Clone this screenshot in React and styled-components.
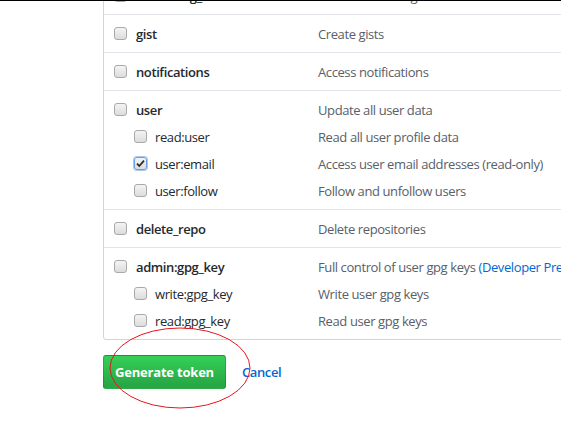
import React from 'react'
import styled, { createGlobalStyle } from 'styled-components'

const GlobalStyle = createGlobalStyle`
  html, body {
    margin: 0;
    padding: 0;
    background: #fff;
    overflow: hidden;
  }
  body {
    font-family: 'Open Sans', 'Liberation Sans', sans-serif;
    font-size: 13px;
    letter-spacing: -0.4px;
    color: #24292e;
  }
`

const scopes = [
  { name: 'admin:org_hook', desc: 'Full control of organization hooks' },
  { name: 'gist', desc: 'Create gists' },
  { name: 'notifications', desc: 'Access notifications' },
  {
    name: 'user',
    desc: 'Update all user data',
    children: [
      { name: 'read:user', desc: 'Read all user profile data' },
      { name: 'user:email', desc: 'Access user email addresses (read-only)', checked: true },
      { name: 'user:follow', desc: 'Follow and unfollow users' },
    ],
  },
  { name: 'delete_repo', desc: 'Delete repositories' },
  {
    name: 'admin:gpg_key',
    desc: 'Full control of user gpg keys',
    link: '(Developer Preview)',
    children: [
      { name: 'write:gpg_key', desc: 'Write user gpg keys' },
      { name: 'read:gpg_key', desc: 'Read user gpg keys' },
    ],
  },
]

const Check = ({ checked }) => (
  <Box $checked={checked}>
    {checked && (
      <svg width='9' height='9' viewBox='0 0 9 9'>
        <path d='M1 4.6 L3.3 7 L8 1.6' fill='none' stroke='#2b2b2b' strokeWidth='1.8' />
      </svg>
    )}
  </Box>
)

const App = () => {
  return (
    <Page>
      <GlobalStyle />
      <Content>
        <Panel>
          {scopes.map((s) => (
            <Group key={s.name}>
              <Item>
                <Label $main>
                  <Check />
                  {s.name}
                </Label>
                <Desc>
                  {s.desc}
                  {s.link && <Link> {s.link}</Link>}
                </Desc>
              </Item>
              {s.children &&
                s.children.map((c) => (
                  <Item key={c.name}>
                    <Label>
                      <Check checked={c.checked} />
                      {c.name}
                    </Label>
                    <Desc>{c.desc}</Desc>
                  </Item>
                ))}
            </Group>
          ))}
        </Panel>
        <Footer>
          <Button>Generate token</Button>
          <Cancel href='#'>Cancel</Cancel>
          <Circle width='144' height='84' viewBox='0 0 144 84'>
            <ellipse cx='72' cy='42' rx='70' ry='40' fill='none' stroke='#e8141c' strokeWidth='1' />
          </Circle>
        </Footer>
      </Content>
    </Page>
  )
}

const Page = styled.div`
  border-top: 1px solid #000;
  height: 438px;
  overflow: hidden;
`

const Content = styled.div`
  padding-left: 103px;
`

const Panel = styled.div`
  width: 560px;
  margin-top: -25px;
  border: 1px solid #d1d5da;
  border-radius: 0 0 0 3px;
`

const Group = styled.div`
  padding: 9px 10px 8px;
  & + & {
    border-top: 1px solid #e1e4e8;
  }
`

const Item = styled.div`
  display: grid;
  grid-template-columns: 204px 1fr;
  line-height: 20px;
  & + & {
    margin-top: 7px;
  }
`

const Label = styled.div`
  display: flex;
  align-items: center;
  padding-left: ${(p) => (p.$main ? '0' : '20px')};
  gap: ${(p) => (p.$main ? '9px' : '8px')};
  font-weight: ${(p) => (p.$main ? 600 : 400)};
  color: #24292e;
`

const Desc = styled.div`
  color: #586069;
  white-space: nowrap;
`

const Link = styled.span`
  color: #0366d6;
`

const Box = styled.span`
  box-sizing: border-box;
  width: 13px;
  height: 13px;
  margin-top: -2px;
  flex: none;
  display: flex;
  align-items: center;
  justify-content: center;
  border-radius: 3px;
  border: 1px solid ${(p) => (p.$checked ? '#6b9ee0' : '#a9a9a9')};
  background: linear-gradient(#f4f4f4, #dcdcdc);
  box-shadow: ${(p) => (p.$checked ? '0 0 0 1px #a9c8f0' : 'none')};
`

const Footer = styled.div`
  position: relative;
  display: flex;
  align-items: center;
  gap: 16px;
  margin-top: 15px;
`

const Button = styled.button`
  box-sizing: border-box;
  width: 123px;
  height: 34px;
  padding: 0;
  white-space: nowrap;
  border: 1px solid rgba(27, 31, 35, 0.2);
  border-radius: 3px;
  background: linear-gradient(-180deg, #34d058 0%, #28a745 90%);
  color: #fff;
  font-family: 'Open Sans', 'Liberation Sans', sans-serif;
  font-size: 13px;
  letter-spacing: -0.2px;
  font-weight: 700;
  cursor: pointer;
`

const Cancel = styled.a`
  color: #0366d6;
  text-decoration: none;
  font-size: 13px;
  font-weight: 600;
`

const Circle = styled.svg`
  position: absolute;
  left: 5px;
  top: -29px;
  pointer-events: none;
`

export default App
